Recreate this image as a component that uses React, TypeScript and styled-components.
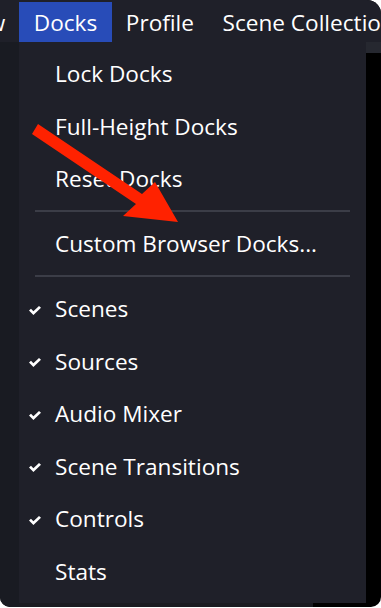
import React from 'react';
import styled, { createGlobalStyle } from 'styled-components';

const Global = createGlobalStyle`
  html, body { margin: 0; padding: 0; background: #ffffff; }
  body { font-family: "Open Sans", "Noto Sans", sans-serif; -webkit-font-smoothing: antialiased; }
`;

const Window = styled.div`
  position: relative;
  width: 381px;
  height: 607px;
  background: #000000;
  border-radius: 0 14px 10px 10px;
  overflow: hidden;
  display: flex;
  flex-direction: column;
`;

const MenuBar = styled.div`
  height: 42px;
  box-sizing: border-box;
  padding-top: 2px;
  background: #1f2029;
  display: flex;
  white-space: nowrap;
  overflow: hidden;
  flex-shrink: 0;
`;

const MenuTitle = styled.div<{ $active?: boolean; $offset?: number }>`
  height: 40px;
  padding: 0 14.3px;
  margin-left: ${(p) => (p.$offset ? `${p.$offset}px` : '0')};
  display: flex;
  align-items: center;
  font-size: 22.6px;
  color: #ffffff;
  background: ${(p) => (p.$active ? '#284cb8' : 'transparent')};
  flex-shrink: 0;
`;

const Body = styled.div`
  flex: 1;
  display: flex;
  min-height: 0;
`;

const Gutter = styled.div`
  width: 19px;
  background: #191b22;
  flex-shrink: 0;
`;

const Column = styled.div`
  width: 347px;
  display: flex;
  flex-direction: column;
  flex-shrink: 0;
`;

const Dropdown = styled.div`
  height: 561px;
  box-sizing: border-box;
  padding: 5.5px 0 5.5px;
  background: #1f2029;
  display: flex;
  flex-direction: column;
`;

const Under = styled.div`
  flex: 1;
  display: flex;
`;

const UnderShade = styled.div`
  width: 294px;
  background: #1a1b21;
`;

const RightSide = styled.div`
  flex: 1;
  display: flex;
  flex-direction: column;
`;

const RightStrip = styled.div`
  height: 11px;
  background: #262830;
`;

const Row = styled.div`
  position: relative;
  height: 52.5px;
  flex-shrink: 0;
  display: flex;
  align-items: center;
  padding-left: 36px;
  font-size: 22.6px;
  color: #ffffff;
  white-space: nowrap;
`;

const CheckMark = styled.svg`
  position: absolute;
  left: 10px;
  top: 50%;
  margin-top: -3px;
  width: 12px;
  height: 9px;
`;

const Separator = styled.div`
  height: 12.5px;
  flex-shrink: 0;
  display: flex;
  align-items: center;
  padding: 0 16px;
  &::after {
    content: '';
    flex: 1;
    height: 2px;
    background: #3b3d47;
  }
`;

const Arrow = styled.svg`
  position: absolute;
  left: 0;
  top: 0;
  width: 381px;
  height: 608px;
  pointer-events: none;
`;

type Item = { label: string; checked?: boolean } | 'sep';

const items: Item[] = [
  { label: 'Lock Docks' },
  { label: 'Full-Height Docks' },
  { label: 'Reset Docks' },
  'sep',
  { label: 'Custom Browser Docks...' },
  'sep',
  { label: 'Scenes', checked: true },
  { label: 'Sources', checked: true },
  { label: 'Audio Mixer', checked: true },
  { label: 'Scene Transitions', checked: true },
  { label: 'Controls', checked: true },
  { label: 'Stats' },
];

export default function App() {
  return (
    <>
      <Global />
      <Window>
        <MenuBar>
          <MenuTitle $offset={-58.5}>View</MenuTitle>
          <MenuTitle $active>Docks</MenuTitle>
          <MenuTitle>Profile</MenuTitle>
          <MenuTitle>Scene Collection</MenuTitle>
        </MenuBar>
        <Body>
          <Gutter />
          <Column>
            <Dropdown>
              {items.map((it, i) =>
                it === 'sep' ? (
                  <Separator key={i} />
                ) : (
                  <Row key={i}>
                    {it.checked && (
                      <CheckMark viewBox="0 0 12 9">
                        <polygon points="0,4.6 2,2.8 4.4,5.2 10,0 12,1.8 4.4,9" fill="#ffffff" />
                      </CheckMark>
                    )}
                    {it.label}
                  </Row>
                )
              )}
            </Dropdown>
            <Under>
              <UnderShade />
            </Under>
          </Column>
          <RightSide>
            <RightStrip />
          </RightSide>
        </Body>
        <Arrow viewBox="0 0 381 608">
          <polygon
            points="38,124 142,194 155,182 178,222 123,216 136,204 32,134"
            fill="#ff2200"
          />
        </Arrow>
      </Window>
    </>
  );
}
